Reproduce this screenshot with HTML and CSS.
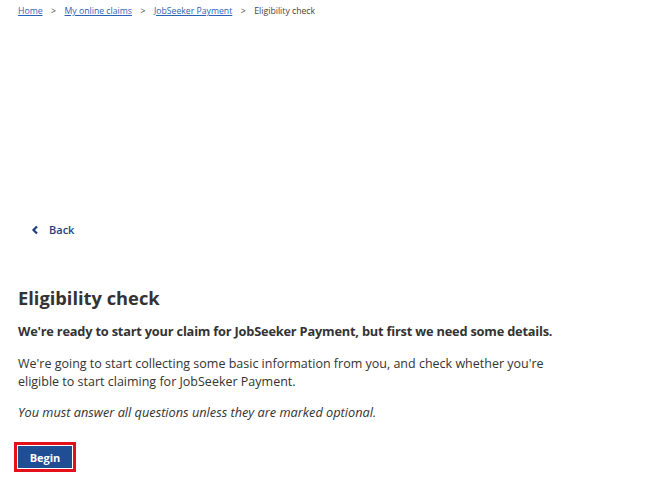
FILE: index.html
```html
<!DOCTYPE html>
<html lang="en">
<head>
  <meta charset="UTF-8" />
  <title>Eligibility check</title>
  <link rel="stylesheet" href="styles.css">
</head>
<body>
  <nav class="breadcrumb" aria-label="Breadcrumb">
    <a href="#">Home</a>
    <span class="sep">&gt;</span>
    <a href="#">My online claims</a>
    <span class="sep">&gt;</span>
    <a href="#">JobSeeker Payment</a>
    <span class="sep">&gt;</span>
    <span class="current">Eligibility check</span>
  </nav>

  <main class="content">
    <a class="back" href="#">
      <svg width="8" height="10" viewBox="0 0 8 10" aria-hidden="true">
        <path d="M6 1.5 L2.5 5 L6 8.5" fill="none" stroke="#1e3f7c" stroke-width="2.2"/>
      </svg>
      <span>Back</span>
    </a>

    <h1>Eligibility check</h1>
    <p class="lead">We're ready to start your claim for JobSeeker Payment, but first we need some details.</p>
    <p class="intro">We're going to start collecting some basic information from you, and check whether you're eligible to start claiming for JobSeeker Payment.</p>
    <p class="note">You must answer all questions unless they are marked optional.</p>

    <div class="actions">
      <button class="btn-begin">Begin</button>
    </div>
  </main>
</body>
</html>
```

FILE: styles.css
```css
body {
  margin: 0;
  font-family: "Open Sans", "Noto Sans", sans-serif;
  color: #333;
  background: #fff;
}
.breadcrumb {
  padding: 4px 18px;
  font-size: 8.7px;
  line-height: 14px;
  display: flex;
  gap: 8.5px;
}
.breadcrumb a {
  color: #2b62b5;
}
.breadcrumb .sep,
.breadcrumb .current {
  color: #444;
}
.content {
  padding: 200px 18px 0;
}
.back {
  display: flex;
  align-items: center;
  gap: 10px;
  margin-left: 13px;
  color: #1e3f7c;
  font-weight: 600;
  font-size: 11px;
  text-decoration: none;
}
h1 {
  margin: 47px 0 0;
  font-size: 18.3px;
  line-height: 28px;
  font-weight: 700;
  color: #333;
}
.lead {
  margin: 9px 0 0;
  font-size: 12.8px;
  font-weight: 700;
  line-height: 20px;
  letter-spacing: -0.2px;
}
.intro {
  margin: 14px 0 0;
  width: 540px;
  font-size: 12.5px;
  line-height: 18px;
}
.note {
  margin: 12px 0 0;
  font-size: 12.75px;
  font-style: italic;
  line-height: 18px;
}
.actions {
  margin-top: 21px;
  margin-left: -4px;
}
.btn-begin {
  border: 3px solid #e5101a;
  padding: 0;
  background: #1f4e94;
  box-shadow: inset 0 0 0 1px #fff;
  color: #fff;
  font-family: inherit;
  font-weight: 700;
  font-size: 11px;
  width: 62px;
  height: 30px;
}
```
